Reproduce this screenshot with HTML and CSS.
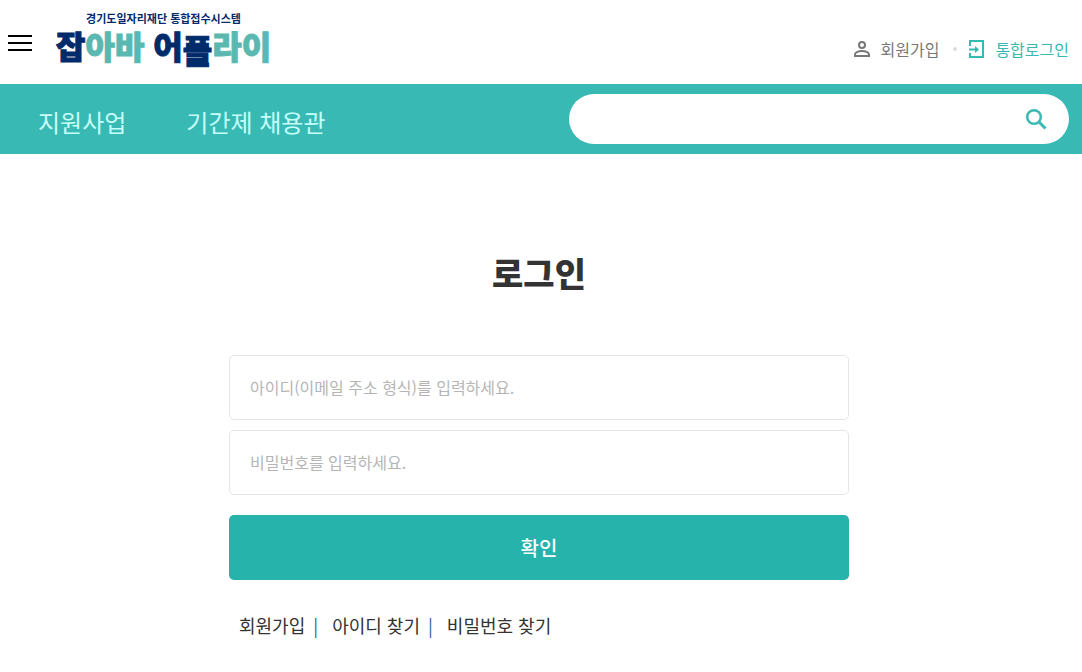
FILE: index.html
```html
<!DOCTYPE html>
<html lang="ko">
<head>
    <meta charset="UTF-8">
    <meta name="viewport" content="width=device-width, initial-scale=1.0">
    <title>로그인</title>
    <link rel="stylesheet" href="styles.css">
</head>
<body>
    <header class="header">
        <button class="menuButton" type="button" aria-label="메뉴">
            <span></span>
            <span></span>
            <span></span>
        </button>

        <a class="logo" href="#">
            <span class="logoSub">경기도일자리재단 통합접수시스템</span>
            <span class="logoMain">잡<span class="mint">아바</span> 어<span class="drop">플</span><span class="mint">라이</span></span>
        </a>

        <nav class="userMenu">
            <a class="join" href="#">
                <svg width="18" height="18" viewBox="0 0 18 18" fill="none" stroke="currentColor" stroke-width="2">
                    <circle cx="9" cy="5" r="3"/>
                    <path d="M2 16v-1.500c0-2.300 4-3.500 7-3.500s7 1.200 7 3.500V16z"/>
                </svg>
                회원가입
            </a>
            <span class="dot"></span>
            <a class="login" href="#">
                <svg width="18" height="20" viewBox="0 0 18 20" fill="none" stroke="currentColor" stroke-width="2">
                    <path d="M3 7V2h13v16H3v-4"/>
                    <path d="M2 10.500h7"/>
                    <path d="M8 7l4 3.500L8 14z" fill="currentColor" stroke="none"/>
                </svg>
                통합로그인
            </a>
        </nav>
    </header>

    <div class="navBar">
        <nav class="mainMenu">
            <a href="#">지원사업</a>
            <a href="#">기간제 채용관</a>
        </nav>
        <form class="search">
            <input type="text" aria-label="검색어">
            <button type="submit" aria-label="검색">
                <svg width="22" height="22" viewBox="0 0 22 22" fill="none" stroke="currentColor">
                    <circle cx="9" cy="9" r="6.800" stroke-width="2.500"/>
                    <path d="M14 14l6.500 6.500" stroke-width="3"/>
                </svg>
            </button>
        </form>
    </div>

    <main class="content">
        <h1>로그인</h1>
        <form class="loginForm">
            <input type="text" aria-label="아이디" placeholder="아이디(이메일 주소 형식)를 입력하세요.">
            <input type="password" aria-label="비밀번호" placeholder="비밀번호를 입력하세요.">
            <button type="submit">확인</button>
        </form>
        <div class="links">
            <a href="#">회원가입</a>
            <a href="#">아이디 찾기</a>
            <a href="#">비밀번호 찾기</a>
        </div>
    </main>
</body>
</html>
```
FILE: styles.css
```css
* {
    box-sizing: border-box;
}

body {
    margin: 0;
    font-family: "Noto Sans CJK KR", sans-serif;
    font-size: 16px;
    line-height: 24px;
    color: #333;
    background-color: #fff;
}

a {
    color: inherit;
    text-decoration: none;
}

input, button {
    font-family: inherit;
    border: none;
}

button {
    padding: 0;
    cursor: pointer;
}

.header {
    display: flex;
    height: 84px;
    padding: 0 13px 0 8px;
}

.menuButton {
    display: flex;
    flex-direction: column;
    gap: 5px;
    width: 24px;
    margin-top: 35px;
    background: none;
}

.menuButton span {
    width: 24px;
    height: 2px;
    background-color: #000;
}

.logo {
    display: flex;
    flex-direction: column;
    align-items: center;
    margin-left: 24px;
    padding-top: 10px;
    color: #002b6b;
}

.logoSub {
    font-size: 11px;
    font-weight: bold;
    line-height: 16px;
}

.logoMain {
    font-size: 32px;
    font-weight: 900;
    line-height: 38px;
    white-space: nowrap;
    -webkit-text-stroke: 1px currentColor;
}

.mint {
    color: #5bb8b0;
}

.drop {
    display: inline-block;
    padding-top: 4px;
    vertical-align: -4px;
    line-height: 30px;
}

.userMenu {
    display: flex;
    align-items: center;
    margin-left: auto;
    padding-top: 14px;
}

.userMenu a {
    display: flex;
    align-items: center;
    gap: 10px;
}

.join {
    color: #777;
}

.login {
    color: #37b9b1;
}

.dot {
    width: 4px;
    height: 4px;
    margin: 0 10px 0 14px;
    border-radius: 50%;
    background-color: #ddd;
}

.navBar {
    display: flex;
    align-items: center;
    justify-content: space-between;
    height: 70px;
    padding: 0 13px 0 38px;
    background-color: #39b9b3;
}

.mainMenu {
    display: flex;
    gap: 60px;
    padding-top: 6px;
    font-size: 24px;
    line-height: 36px;
    color: #c5fffb;
}

.search {
    display: flex;
    align-items: center;
    width: 500px;
    height: 50px;
    padding: 0 22px 0 30px;
    border-radius: 25px;
    background-color: #fff;
}

.search input {
    flex: 1;
    font-size: 16px;
    outline: none;
}

.search button {
    display: flex;
    color: #39b9b3;
    background: none;
}

.content {
    max-width: 624px;
    margin: 0 auto;
    padding: 92px 4px 0 0;
}

/* shares the 4px gutter with the form below */
h1 {
    margin: 0 0 55px;
    font-size: 34px;
    font-weight: 900;
    line-height: 54px;
    text-align: center;
}

.loginForm {
    display: flex;
    flex-direction: column;
    gap: 10px;
}

.loginForm input {
    height: 65px;
    padding: 0 20px 2px;
    font-size: 16px;
    border: 1px solid #e5e5e5;
    border-radius: 5px;
}

.loginForm input::placeholder {
    color: #b5b5b5;
}

.loginForm button {
    height: 65px;
    margin-top: 10px;
    font-size: 20px;
    font-weight: 500;
    color: #fff;
    border-radius: 5px;
    background-color: #25b3ac;
}

.links {
    display: flex;
    padding: 31px 10px;
    font-size: 18px;
    line-height: 28px;
}

.links a + a::before {
    content: "|";
    margin: 0 14px 0 8px;
    color: #2a6496;
}
```
